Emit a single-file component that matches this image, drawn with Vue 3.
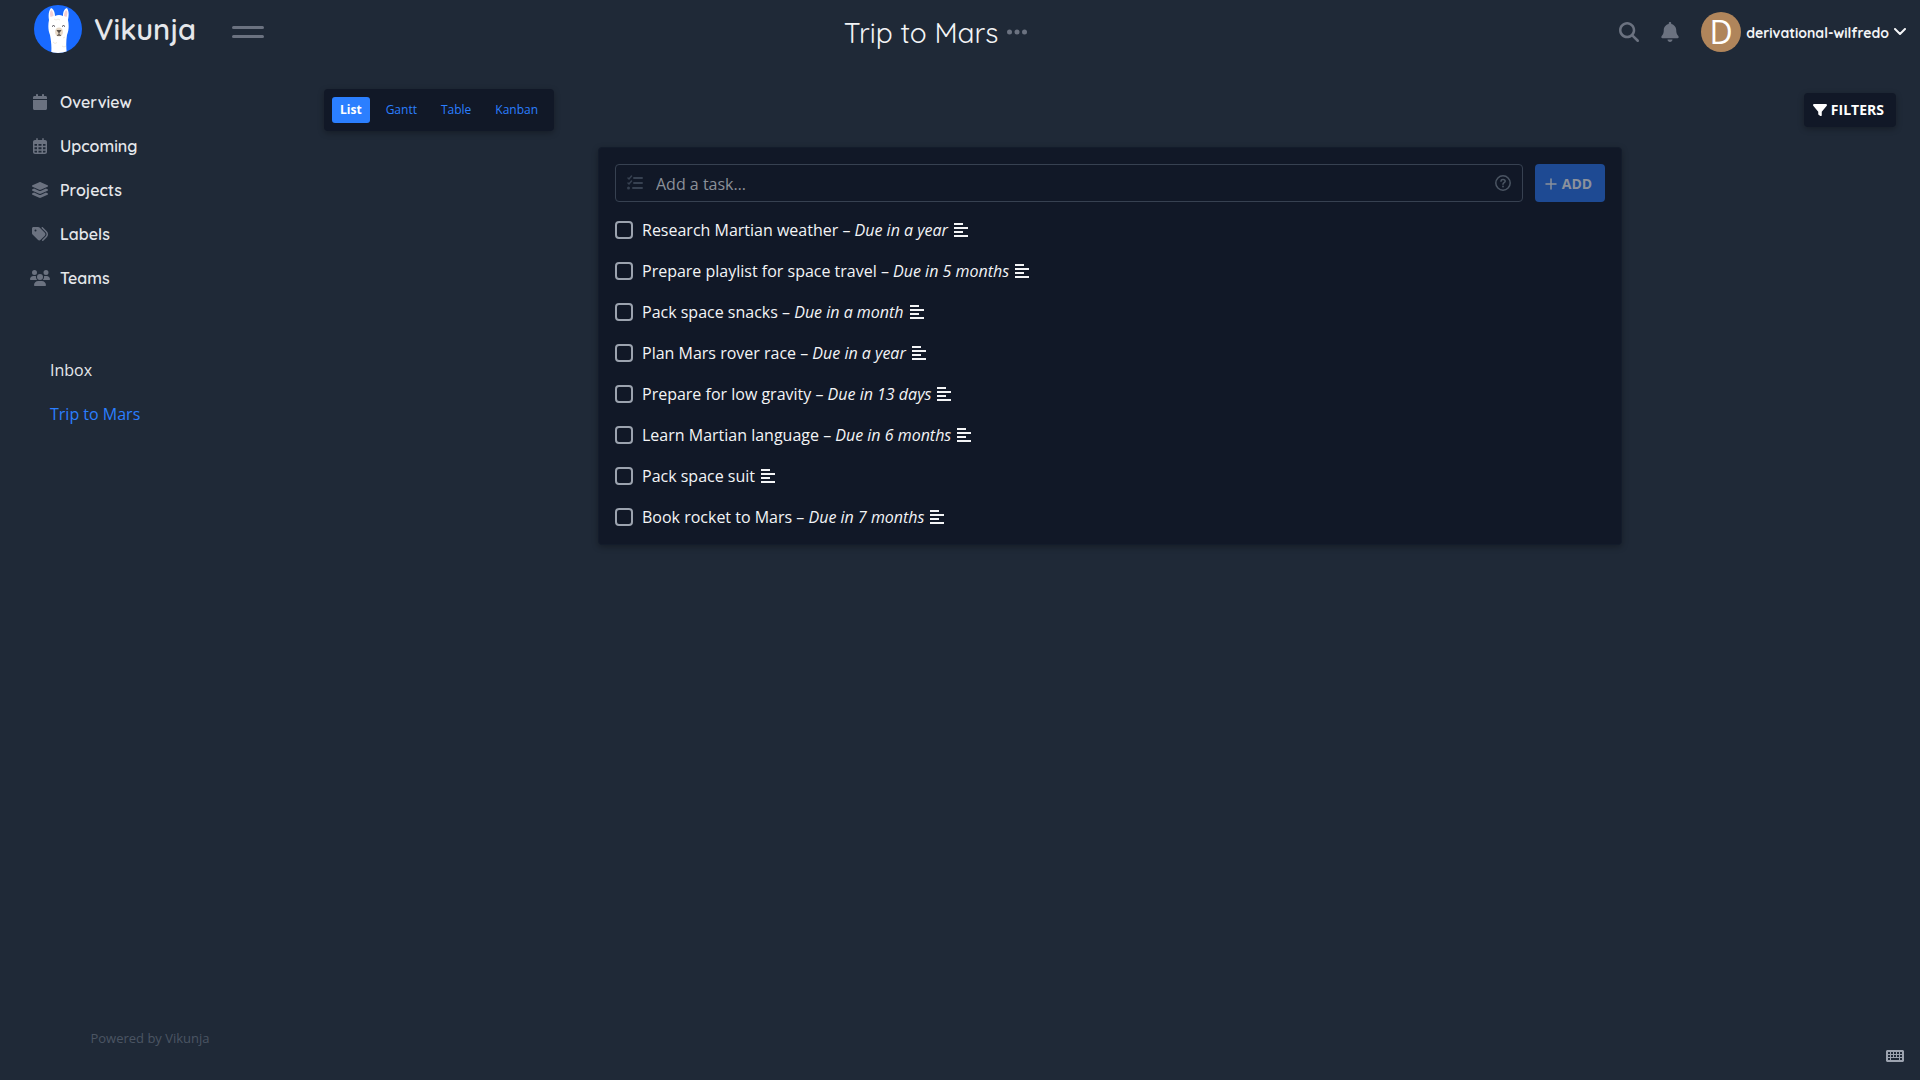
<template>
  <div class="app">
    <header class="navbar">
      <div class="brand">
        <a href="#" class="logo" aria-label="Vikunja">
          <svg class="logo-mark" viewBox="0 0 48 48" aria-hidden="true">
            <defs>
              <clipPath id="logo-clip"><circle cx="24" cy="24" r="24" /></clipPath>
            </defs>
            <g clip-path="url(#logo-clip)">
              <rect width="48" height="48" fill="#196aff" />
              <path d="M17 50C18 41 17 36 16 30C14 25 14 20 15 15C14 10 15 5 17 3C20 4 21 8 21 11Q25 9 29 11C29 7 30 4 33 3C35 6 35 10 34 15C35 20 35 25 33 30C32 36 32 42 33 50Z" fill="#fff" />
              <path d="M16.500 12C15.500 8 16 6 17.500 5C19 7 19.500 9 19.500 11Z" fill="#f5cfd2" />
              <path d="M32.500 12C34 8 33.500 6 32 5C30.500 7 30 9 30 11Z" fill="#f5cfd2" />
              <ellipse cx="25" cy="27" rx="4" ry="4.500" fill="#e8d9c6" />
              <path d="M23 25.500h4l-2 2zM25 27v3M23 30.500q2-1.500 4 0" fill="#4d443c" stroke="#4d443c" stroke-width=".8" />
              <path d="M18 21.500q1.500-2 3 0M28 21.500q1.500-2 3 0" fill="none" stroke="#42414a" stroke-width="1" />
              <path d="M20 14l2 1 2-1 2 1M19 37l2 1.500 2-1M28 41l2 1 2-1M29 33l2-1" fill="none" stroke="#eadfce" stroke-width=".7" />
            </g>
          </svg>
          <span class="logo-text">Vikunja</span>
        </a>
        <button class="menu-toggle" type="button" aria-label="Toggle menu">
          <span></span>
          <span></span>
        </button>
      </div>

      <div class="project-title">
        <h1>Trip to Mars</h1>
        <button class="icon-button" type="button" aria-label="Project options">
          <svg width="20" height="6" viewBox="0 0 20 6" fill="currentColor">
            <circle cx="2.500" cy="3" r="2.500" />
            <circle cx="10" cy="3" r="2.500" />
            <circle cx="17.500" cy="3" r="2.500" />
          </svg>
        </button>
      </div>

      <div class="navbar-end">
        <button class="icon-button" type="button" aria-label="Search">
          <svg width="20" height="20" viewBox="0 0 512 512" fill="currentColor"><path :d="icons.search" /></svg>
        </button>
        <button class="icon-button" type="button" aria-label="Notifications">
          <svg width="18" height="20" viewBox="0 0 448 512" fill="currentColor"><path :d="icons.bell" /></svg>
        </button>
        <button class="user" type="button">
          <span class="avatar">D</span>
          <span class="username">derivational-wilfredo</span>
          <svg width="12" height="8" viewBox="0 0 12 8" fill="none" stroke="currentColor" stroke-width="2" stroke-linecap="round" stroke-linejoin="round"><path d="M1 1l5 5 5-5" /></svg>
        </button>
      </div>
    </header>

    <div class="body">
      <aside class="sidebar">
        <nav>
          <ul class="menu">
            <li v-for="item in menu" :key="item.label">
              <a href="#">
                <span class="menu-icon">
                  <svg :width="item.width" height="16" :viewBox="item.viewBox" fill="currentColor"><path :d="item.path" /></svg>
                </span>
                {{ item.label }}
              </a>
            </li>
          </ul>
          <ul class="projects">
            <li v-for="project in projects" :key="project">
              <a href="#" :class="{ active: project === currentProject }">{{ project }}</a>
            </li>
          </ul>
        </nav>
        <a href="#" class="powered">Powered by Vikunja</a>
      </aside>

      <main class="content">
        <div class="toolbar">
          <div class="views">
            <button
              v-for="view in views"
              :key="view"
              type="button"
              :class="{ active: view === currentView }"
              @click="currentView = view"
            >{{ view }}</button>
          </div>
          <button class="filters" type="button">
            <svg width="14" height="14" viewBox="0 0 512 512" fill="currentColor"><path :d="icons.filter" /></svg>
            Filters
          </button>
        </div>

        <section class="card">
          <form class="add-task" @submit.prevent="addTask">
            <div class="field">
              <svg width="16" height="16" viewBox="0 0 16 16" fill="none" stroke="currentColor" stroke-width="2" stroke-linecap="round" aria-hidden="true">
                <path d="M7 3h8M7 8h8M6 13h9" />
                <path d="M1 3l1 1 2.500-3M1 8l1 1 2.500-3" stroke-width="1.500" />
                <circle cx="1.500" cy="13" r="1.500" fill="currentColor" stroke="none" />
              </svg>
              <input v-model="newTask" type="text" placeholder="Add a task…" aria-label="Add a task" />
              <button class="help" type="button" aria-label="Quick add help">
                <svg width="16" height="16" viewBox="0 0 16 16" fill="none" stroke="currentColor" stroke-width="1.500" stroke-linecap="round">
                  <circle cx="8" cy="8" r="7.200" />
                  <path d="M6 6.200C6 4.800 7 4.500 8 4.500C9.300 4.500 10.200 5.200 10.200 6.300C10.200 7.700 8 7.700 8 9.200" />
                  <circle cx="8" cy="11.500" r=".9" fill="currentColor" stroke="none" />
                </svg>
              </button>
            </div>
            <button class="add" type="submit" :disabled="!newTask">
              <svg width="12" height="12" viewBox="0 0 12 12" fill="none" stroke="currentColor" stroke-width="1.500" stroke-linecap="round"><path d="M6 1v10M1 6h10" /></svg>
              Add
            </button>
          </form>

          <ul class="tasks">
            <li v-for="task in tasks" :key="task.id">
              <input :id="`task-${task.id}`" v-model="task.done" type="checkbox" />
              <label :for="`task-${task.id}`">{{ task.title }}<template v-if="task.due"> – <em>{{ task.due }}</em></template></label>
              <svg width="14" height="14" viewBox="0 0 14 14" fill="currentColor" aria-hidden="true">
                <path d="M0 0h9v2H0zM0 4h14v2H0zM0 8h9v2H0zM0 12h14v2H0z" />
              </svg>
            </li>
          </ul>
        </section>
      </main>
    </div>

    <button class="shortcuts" type="button" aria-label="Keyboard shortcuts">
      <svg width="18" height="12" viewBox="0 0 18 12" fill="currentColor">
        <path fill-rule="evenodd" d="M1 0h16l1 1v10l-1 1H1l-1-1V1zM2 2v2h2V2zM5 2v2h2V2zM8 2v2h2V2zM11 2v2h2V2zM14 2v2h2V2zM2 5v2h2V5zM5 5v2h2V5zM8 5v2h2V5zM11 5v2h2V5zM14 5v2h2V5zM2 8v2h2V8zM5 8v2h8V8zM14 8v2h2V8z" />
      </svg>
    </button>
  </div>
</template>

<script setup>
import { ref } from 'vue'

const icons = {
  search: 'M416 208c0 45.9-14.9 88.3-40 122.7L502.6 457.4c12.5 12.5 12.5 32.8 0 45.3s-32.8 12.5-45.3 0L330.7 376c-34.4 25.2-76.8 40-122.7 40C93.1 416 0 322.9 0 208S93.1 0 208 0S416 93.1 416 208zM208 352a144 144 0 1 0 0-288 144 144 0 1 0 0 288z',
  bell: 'M224 0c-17.7 0-32 14.3-32 32V51.2C119 66 64 130.6 64 208v18.8c0 47-17.3 92.4-48.5 127.6l-7.4 8.3c-8.4 9.4-10.4 22.9-5.3 34.4S19.4 416 32 416H416c12.6 0 24-7.4 29.2-18.9s3.1-25-5.3-34.4l-7.4-8.3C401.3 319.2 384 273.9 384 226.8V208c0-77.4-55-142-128-156.8V32c0-17.7-14.3-32-32-32zm45.3 493.3c12-12 18.7-28.3 18.7-45.3H224 160c0 17 6.7 33.3 18.7 45.3s28.3 18.7 45.3 18.7s33.3-6.7 45.3-18.7z',
  filter: 'M3.9 54.9C10.5 40.9 24.5 32 40 32H472c15.5 0 29.5 8.9 36.1 22.9s4.6 30.5-5.2 42.5L320 320.9V448c0 12.1-6.8 23.2-17.7 28.6s-23.8 4.3-33.5-3l-64-48c-8.1-6-12.8-15.5-12.8-25.6V320.9L9 97.3C-.7 85.4-2.8 68.8 3.9 54.9z'
}

const menu = [
  {
    label: 'Overview',
    width: 14,
    viewBox: '0 0 448 512',
    path: 'M96 32V64H48C21.5 64 0 85.5 0 112v48H448V112c0-26.5-21.5-48-48-48H352V32c0-17.7-14.3-32-32-32s-32 14.3-32 32V64H160V32c0-17.7-14.3-32-32-32S96 14.3 96 32zM448 192H0V464c0 26.5 21.5 48 48 48H400c26.5 0 48-21.5 48-48V192z'
  },
  {
    label: 'Upcoming',
    width: 14,
    viewBox: '0 0 448 512',
    path: 'M152 24c0-13.3-10.7-24-24-24s-24 10.7-24 24V64H64C28.7 64 0 92.7 0 128v16 48V448c0 35.3 28.7 64 64 64H384c35.3 0 64-28.7 64-64V192 144 128c0-35.3-28.7-64-64-64H344V24c0-13.3-10.7-24-24-24s-24 10.7-24 24V64H152V24zM48 192h80v56H48V192zm0 104h80v64H48V296zm128 0h96v64H176V296zm144 0h80v64H320V296zm80-48H320V192h80v56zm0 160v40c0 8.8-7.2 16-16 16H320V408h80zm-128 0v56H176V408h96zm-144 0v56H64c-8.8 0-16-7.2-16-16V408h80zM272 248H176V192h96v56z'
  },
  {
    label: 'Projects',
    width: 18,
    viewBox: '0 0 576 512',
    path: 'M264.5 5.2c14.9-6.9 32.1-6.9 47 0l218.6 101c8.5 3.9 13.9 12.4 13.9 21.8s-5.4 17.9-13.9 21.8l-218.6 101c-14.9 6.9-32.1 6.9-47 0L45.9 149.8C37.4 145.8 32 137.3 32 128s5.4-17.9 13.9-21.8L264.5 5.2zM476.9 209.6l53.2 24.6c8.5 3.9 13.9 12.4 13.9 21.8s-5.4 17.9-13.9 21.8l-218.6 101c-14.9 6.9-32.1 6.9-47 0L45.9 277.8C37.4 273.8 32 265.3 32 256s5.4-17.9 13.9-21.8l53.2-24.6 152 70.2c23.4 10.8 50.4 10.8 73.8 0l152-70.2zm-152 198.2l152-70.2 53.2 24.6c8.5 3.9 13.9 12.4 13.9 21.8s-5.4 17.9-13.9 21.8l-218.6 101c-14.9 6.9-32.1 6.9-47 0L45.9 405.8C37.4 401.8 32 393.3 32 384s5.4-17.9 13.9-21.8l53.2-24.6 152 70.2c23.4 10.8 50.4 10.8 73.8 0z'
  },
  {
    label: 'Labels',
    width: 16,
    viewBox: '0 0 512 512',
    path: 'M345 39.1L472.8 168.4c52.4 53 52.4 138.2 0 191.2L360.8 472.9c-9.3 9.4-24.5 9.5-33.9 .2s-9.5-24.5-.2-33.9L438.6 325.9c33.9-34.3 33.9-89.4 0-123.7L310.9 72.9c-9.3-9.4-9.2-24.6 .2-33.9s24.6-9.2 33.9 .2zM0 229.5V80C0 53.5 21.5 32 48 32H197.5c17 0 33.3 6.7 45.3 18.7l168 168c25 25 25 65.5 0 90.5L277.3 442.7c-25 25-65.5 25-90.5 0l-168-168C6.7 262.7 0 246.5 0 229.5zM144 144a32 32 0 1 0 -64 0 32 32 0 1 0 64 0z'
  },
  {
    label: 'Teams',
    width: 20,
    viewBox: '0 0 640 512',
    path: 'M144 0a80 80 0 1 1 0 160A80 80 0 1 1 144 0zM512 0a80 80 0 1 1 0 160A80 80 0 1 1 512 0zM0 298.7C0 239.8 47.8 192 106.7 192h42.7c15.9 0 31 3.5 44.6 9.7c-1.3 7.2-1.9 14.7-1.9 22.3c0 38.2 16.8 72.5 43.3 96c-.2 0-.4 0-.7 0H21.3C9.6 320 0 310.4 0 298.7zM405.3 320c-.2 0-.4 0-.7 0c26.6-23.5 43.3-57.8 43.3-96c0-7.6-.7-15-1.9-22.3c13.6-6.3 28.7-9.7 44.6-9.7h42.7C592.2 192 640 239.8 640 298.7c0 11.8-9.6 21.3-21.3 21.3H405.3zM224 224a96 96 0 1 1 192 0 96 96 0 1 1 -192 0zM128 485.3C128 411.7 187.7 352 261.3 352H378.7C452.3 352 512 411.7 512 485.3c0 14.7-11.9 26.7-26.7 26.7H154.7c-14.7 0-26.7-11.9-26.7-26.7z'
  }
]

const projects = ['Inbox', 'Trip to Mars']
const currentProject = ref('Trip to Mars')

const views = ['List', 'Gantt', 'Table', 'Kanban']
const currentView = ref('List')

const newTask = ref('')
const tasks = ref([
  { id: 1, title: 'Research Martian weather', due: 'Due in a year', done: false },
  { id: 2, title: 'Prepare playlist for space travel', due: 'Due in 5 months', done: false },
  { id: 3, title: 'Pack space snacks', due: 'Due in a month', done: false },
  { id: 4, title: 'Plan Mars rover race', due: 'Due in a year', done: false },
  { id: 5, title: 'Prepare for low gravity', due: 'Due in 13 days', done: false },
  { id: 6, title: 'Learn Martian language', due: 'Due in 6 months', done: false },
  { id: 7, title: 'Pack space suit', due: '', done: false },
  { id: 8, title: 'Book rocket to Mars', due: 'Due in 7 months', done: false }
])

function addTask() {
  tasks.value.unshift({ id: Date.now(), title: newTask.value, due: '', done: false })
  newTask.value = ''
}
</script>

<style>
body {
  background: #1f2937;
}
</style>

<style scoped>
.app {
  min-height: 100vh;
  display: flex;
  flex-direction: column;
  background: #1f2937;
  color: #f3f4f6;
  font-family: "Open Sans", "Noto Sans", sans-serif;
  font-size: 16px;
  line-height: 24px;
}
.app * {
  box-sizing: border-box;
}
button {
  border: 0;
  margin: 0;
  padding: 0;
  background: none;
  color: inherit;
  font: inherit;
  cursor: pointer;
}
a {
  color: inherit;
  text-decoration: none;
}
ul {
  list-style: none;
  margin: 0;
  padding: 0;
}
svg {
  display: block;
  flex: none;
}

/* top bar */
.navbar {
  display: flex;
  align-items: center;
  justify-content: space-between;
  height: 64px;
  padding: 0 14px 0 34px;
  font-family: Quicksand, Lato, sans-serif;
}
.brand,
.navbar-end {
  display: flex;
  align-items: center;
}
.logo {
  display: flex;
  align-items: center;
  gap: 12px;
  padding-bottom: 6px;
}
.logo-mark {
  width: 48px;
  height: 48px;
}
.logo-text {
  color: #e5e7eb;
  font-size: 29px;
  font-weight: 600;
  line-height: 32px;
}
.menu-toggle {
  display: flex;
  flex-direction: column;
  gap: 6px;
  width: 32px;
  margin-left: 36px;
}
.menu-toggle span {
  height: 3px;
  border-radius: 2px;
  background: #6b7280;
}
.project-title {
  display: flex;
  align-items: center;
  gap: 9px;
  padding-right: 12px;
}
.project-title h1 {
  margin: 0;
  padding-top: 2px;
  font-size: 28px;
  font-weight: 400;
  line-height: 36px;
}
.icon-button {
  color: #6b7280;
}
.navbar-end {
  justify-content: flex-end;
  gap: 22px;
}
.user {
  display: flex;
  align-items: center;
  gap: 5px;
}
.avatar {
  display: flex;
  align-items: center;
  justify-content: center;
  width: 40px;
  height: 40px;
  border-radius: 50%;
  background: #b0855b;
  color: #fff;
  font-family: "Open Sans", "Noto Sans", sans-serif;
  font-size: 32px;
}
.username {
  padding-top: 2px;
  font-size: 14px;
  font-weight: 700;
}

/* sidebar */
.body {
  flex: 1;
  display: flex;
}
.sidebar {
  flex: none;
  width: 300px;
  display: flex;
  flex-direction: column;
  justify-content: space-between;
  padding: 16px 0 30px;
}
.menu a {
  display: flex;
  align-items: center;
  gap: 10px;
  height: 44px;
  padding-left: 30px;
  color: #e5e7eb;
  font-family: Quicksand, Lato, sans-serif;
  font-weight: 600;
}
.menu-icon {
  display: flex;
  justify-content: center;
  width: 20px;
  color: #6b7280;
}
.projects {
  margin-top: 48px;
}
.projects a {
  display: flex;
  align-items: center;
  height: 44px;
  padding-left: 50px;
  color: #e5e7eb;
}
.projects a.active {
  color: #2b7fff;
}
.powered {
  color: #4b5563;
  font-size: 13px;
  text-align: center;
}

/* content */
.content {
  flex: 1;
  min-width: 0;
  padding: 25px 24px 24px;
}
.toolbar {
  display: flex;
  align-items: center;
  justify-content: space-between;
  margin-bottom: 16px;
}
.views {
  display: flex;
  padding: 8px;
  border-radius: 4px;
  background: #111827;
  box-shadow: 0 2px 6px rgba(0, 0, 0, 0.3);
}
.views button {
  padding: 1px 8px;
  border-radius: 3px;
  color: #2b7fff;
  font-size: 12px;
}
.views button + button {
  margin-left: 8px;
}
.views button.active {
  background: #2b7fff;
  color: #fff;
  font-weight: 700;
}
.filters {
  display: flex;
  align-items: center;
  gap: 4px;
  height: 34px;
  padding: 0 12px 0 9px;
  border-radius: 4px;
  background: #111827;
  color: #fff;
  font-size: 14px;
  font-weight: 700;
  text-transform: uppercase;
  box-shadow: 0 2px 6px rgba(0, 0, 0, 0.3);
}
.card {
  max-width: 1024px;
  margin: 0 auto;
  padding: 16px 16px 7px;
  border: 1px solid #131c2b;
  border-radius: 4px;
  background: #111827;
  box-shadow: 0 2px 6px rgba(0, 0, 0, 0.3);
}
.add-task {
  display: flex;
  gap: 12px;
}
.field {
  flex: 1;
  display: flex;
  align-items: center;
  gap: 13px;
  height: 38px;
  padding: 0 11px;
  border: 1px solid #374151;
  border-radius: 4px;
  color: #374151;
}
.field input {
  flex: 1;
  min-width: 0;
  padding: 2px 0 0;
  border: 0;
  outline: 0;
  background: transparent;
  color: #f3f4f6;
  font: inherit;
}
.field input::placeholder {
  color: #8b9099;
  opacity: 1;
}
.help {
  color: #4b5563;
}
.add {
  display: flex;
  align-items: center;
  justify-content: center;
  gap: 5px;
  width: 70px;
  padding: 2px 3px 0 0;
  border-radius: 4px;
  background: #2b7fff;
  color: #fff;
  font-size: 14px;
  font-weight: 700;
  text-transform: uppercase;
}
.add:disabled {
  background: #1e4a93;
  color: #8b919c;
}
.tasks {
  padding-top: 7px;
}
.tasks li {
  display: flex;
  align-items: center;
  height: 41px;
}
.tasks input {
  appearance: none;
  width: 18px;
  height: 18px;
  margin: 0 9px 0 0;
  border: 2px solid #9ca3af;
  border-radius: 4px;
}
.tasks input:checked {
  border-color: #2b7fff;
  background: #2b7fff;
}
.tasks svg {
  margin-left: 6px;
}

.shortcuts {
  position: fixed;
  right: 16px;
  bottom: 18px;
  color: #9ca3af;
}
</style>
